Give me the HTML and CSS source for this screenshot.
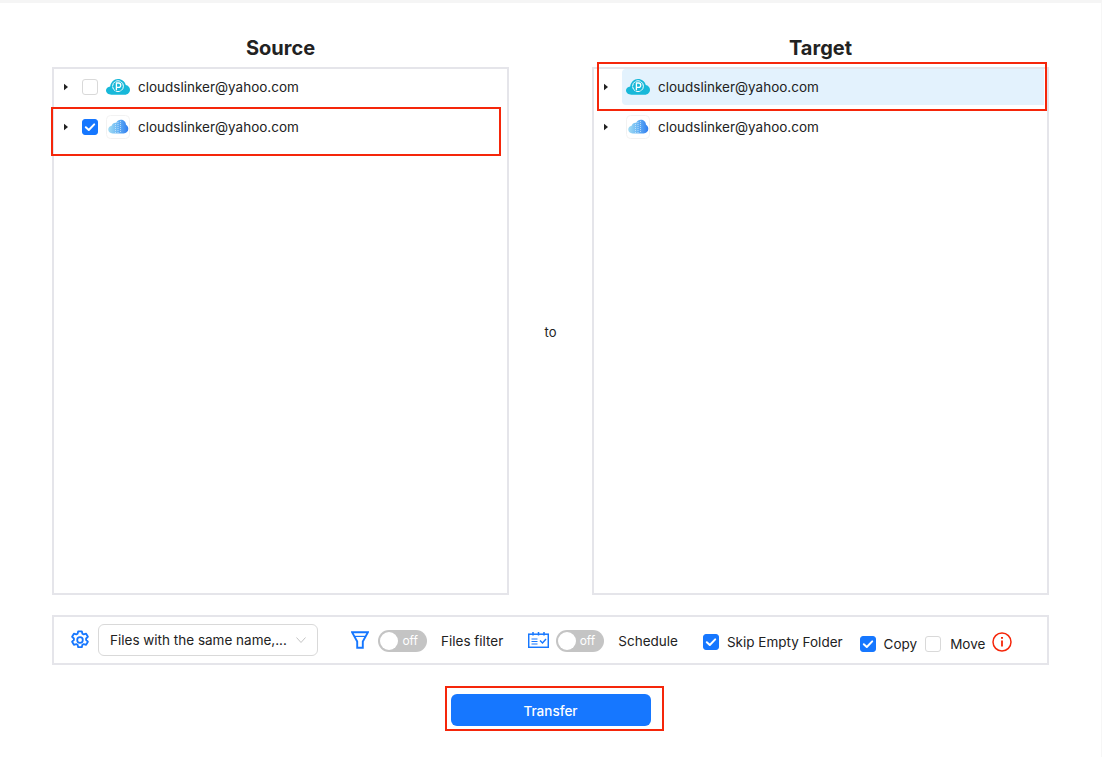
FILE: index.html
```html
<!DOCTYPE html>
<html lang="en">
<head>
<meta charset="utf-8">
<title>Transfer</title>
<link rel="stylesheet" href="styles.css">
</head>
<body>
<svg class="defs" width="0" height="0" aria-hidden="true">
  <defs>
    <linearGradient id="ic" x1="0" y1="0" x2="1" y2="0">
      <stop offset="0" stop-color="#a3dcf3"/>
      <stop offset="0.45" stop-color="#6db8f4"/>
      <stop offset="1" stop-color="#2f7df0"/>
    </linearGradient>
    <symbol id="pcloud" viewBox="0 0 24 16">
      <path d="M5.500 15.700C2.400 15.700 0 13.800 0 11.300 0 9.100 1.800 7.700 4.200 7.400 4.800 3.200 8 .1 12 .1c3.800 0 6.900 2.600 7.800 5.800 2.400.5 4.200 2.400 4.200 4.800 0 2.800-2.300 5-5.300 5z" fill="#17b8d9"/>
      <circle cx="12" cy="7.200" r="5.400" fill="none" stroke="#fff" stroke-width="1" stroke-dasharray="5 .6"/>
      <path d="M10.400 11.200V4h2.200a2.100 2.100 0 0 1 0 4.300h-2.200" fill="none" stroke="#fff" stroke-width="1.300"/>
    </symbol>
    <symbol id="icloud" viewBox="0 0 24 24">
      <rect x=".5" y=".5" width="23" height="23" rx="4" fill="#fff" stroke="#f2f2f2"/>
      <path d="M6.500 18.500C4 18.500 2.200 16.800 2.200 14.600c0-2 1.500-3.500 3.400-3.800C6.300 8.500 8.300 7.500 10.100 7.900 11 6 12.800 4.800 14.800 4.800c2.900 0 5.100 2.100 5.200 4.900 1.400.8 2.300 2.300 2.300 4.100 0 2.700-2 4.700-4.700 4.700z" fill="url(#ic)"/>
      <path d="M9.500 9v9M12 7v11M14.500 6v12" stroke="#d7ebfc" stroke-width=".7" stroke-dasharray="1 1" fill="none"/>
    </symbol>
    <symbol id="tick" viewBox="0 0 16 16">
      <path d="M3.800 8.200 6.800 11 12.200 5.400" fill="none" stroke="#fff" stroke-width="2" stroke-linecap="round" stroke-linejoin="round"/>
    </symbol>
    <symbol id="caret" viewBox="0 0 6 8">
      <path d="M1 .7 5 4 1 7.300z" fill="#222"/>
    </symbol>
  </defs>
</svg>

<main class="page">
  <div class="columns">
    <section class="col">
      <h2 class="title">Source</h2>
      <div class="panel">
        <div class="row">
          <svg class="caret"><use href="#caret"/></svg>
          <span class="check"></span>
          <svg class="logo"><use href="#pcloud"/></svg>
          <span class="label">cloudslinker@yahoo.com</span>
        </div>
        <div class="row">
          <svg class="caret"><use href="#caret"/></svg>
          <span class="check on"><svg class="tick"><use href="#tick"/></svg></span>
          <svg class="logo square"><use href="#icloud"/></svg>
          <span class="label">cloudslinker@yahoo.com</span>
        </div>
        <span class="mark mark-source"></span>
      </div>
    </section>

    <div class="to">to</div>

    <section class="col">
      <h2 class="title">Target</h2>
      <div class="panel">
        <div class="row">
          <svg class="caret"><use href="#caret"/></svg>
          <div class="pick selected">
            <svg class="logo"><use href="#pcloud"/></svg>
            <span class="label">cloudslinker@yahoo.com</span>
          </div>
        </div>
        <div class="row">
          <svg class="caret"><use href="#caret"/></svg>
          <div class="pick">
            <svg class="logo square"><use href="#icloud"/></svg>
            <span class="label">cloudslinker@yahoo.com</span>
          </div>
        </div>
        <span class="mark mark-target"></span>
      </div>
    </section>
  </div>

  <div class="toolbar">
    <svg class="gear" viewBox="0 0 20 20" fill="none" stroke="#1677ff" stroke-width="1.800" stroke-linejoin="round">
      <path d="M8.200 1.300h3.600l.6 2.400 1.300.7 2.400-.7 1.800 3.100-1.800 1.700v1.500l1.800 1.700-1.800 3.100-2.400-.7-1.300.7-.6 2.400H8.200l-.6-2.400-1.300-.7-2.400.7-1.800-3.100 1.800-1.700V8.500L2.100 6.800l1.800-3.100 2.400.7 1.300-.7z"/>
      <circle cx="10" cy="10" r="2.800"/>
    </svg>
    <div class="select">
      <span class="select-text">Files with the same name,...</span>
      <svg class="chev" viewBox="0 0 10 8" fill="none" stroke="#c4c4c4" stroke-width="1"><path d="M.5 1.500 5 6.500 9.500 1.500"/></svg>
    </div>
    <svg class="funnel" viewBox="0 0 18 18" fill="none" stroke="#1677ff" stroke-width="1.900" stroke-linejoin="miter">
      <path d="M1 1.200h16L11.800 10.500v6.300H6.200v-6.300z"/>
      <path d="M3.500 5.400h11" stroke-width="1.200"/>
    </svg>
    <span class="switch"><span class="knob"></span><span class="off">off</span></span>
    <span class="opt opt-filter">Files filter</span>
    <svg class="cal" viewBox="0 0 21 16" fill="none" stroke="#1677ff" stroke-width="1.500">
      <rect x=".7" y="2.200" width="19.600" height="13.100"/>
      <path d="M5 0v3.500M10.500 0v3.500M16 0v3.500" stroke-width="1.500"/>
      <path d="M3.500 7h6M3.500 9.500h6M3.500 12h6" stroke-width="1"/>
      <path d="M12 8.500l2.500 2.500 3.500-4" stroke-width="1.400"/>
    </svg>
    <span class="switch switch-sched"><span class="knob"></span><span class="off">off</span></span>
    <span class="opt opt-sched">Schedule</span>
    <span class="check on mid"><svg class="tick"><use href="#tick"/></svg></span>
    <span class="opt opt-skip mid">Skip Empty Folder</span>
    <span class="check on low"><svg class="tick"><use href="#tick"/></svg></span>
    <span class="opt opt-copy low">Copy</span>
    <span class="check low"></span>
    <span class="opt opt-move low">Move</span>
    <svg class="info" viewBox="0 0 20 20" fill="none" stroke="#f5260a" stroke-width="1.500">
      <circle cx="10" cy="10" r="9"/>
      <path d="M10 8.500v6" stroke-width="1.800"/>
      <path d="M10 5v1.800" stroke-width="2"/>
    </svg>
  </div>

  <div class="actions">
    <button class="transfer" type="button">Transfer</button>
    <span class="mark mark-transfer"></span>
  </div>
</main>
</body>
</html>
```

FILE: styles.css
```css
* { box-sizing: border-box; }
html, body { margin: 0; height: 100%; }
body {
  background: #fff;
  color: #222;
  font-family: Inter, "Liberation Sans", sans-serif;
  font-size: 13.5px;
  overflow: hidden;
}
.defs { position: absolute; }
.page {
  height: 757px;
  padding: 0 52px;
  border-top: 3px solid #f5f5f5;
  border-right: 1px solid #f6f6f6;
}
.columns {
  display: grid;
  grid-template-columns: 457px 1fr 457px;
  height: 592px;
}
.col { display: flex; flex-direction: column; }
.title {
  margin: 0;
  height: 64px;
  padding-top: 31px;
  text-align: center;
  font-size: 20px;
  line-height: 28px;
  font-weight: 700;
  color: #222;
}
.panel {
  position: relative;
  display: flex;
  flex-direction: column;
  gap: 4px;
  height: 528px;
  border: 2px solid #e5e5ea;
}
.row {
  display: flex;
  align-items: center;
  height: 36px;
  padding-left: 9px;
}
.caret { width: 6px; height: 8px; flex: none; margin-right: 13px; }
.check {
  width: 16px;
  height: 16px;
  flex: none;
  display: inline-flex;
  border-radius: 3px;
  border: 1px solid #d9d9d9;
  background: #fff;
}
.check.on { background: #1677ff; border-color: #1677ff; }
.tick { width: 16px; height: 16px; margin: -1px; flex: none; }
.logo { width: 24px; height: 16px; margin-left: 8px; margin-right: 8px; flex: none; }
.logo.square { height: 24px; }
.label { font-size: 13.5px; line-height: 20px; color: #222; }
.pick {
  display: flex;
  align-items: center;
  flex: 1;
  height: 100%;
  margin-right: 3px;
  border-radius: 4px 0 0 4px;
}
.pick .logo { margin-left: 4px; }
.pick.selected { background: #e3f2fd; }
.to {
  display: flex;
  align-items: center;
  justify-content: center;
  padding-top: 65px;
  font-size: 13px;
}
.toolbar {
  display: flex;
  align-items: center;
  height: 50px;
  margin-top: 20px;
  border: 2px solid #e5e5ea;
  padding-left: 16px;
}
.gear { width: 20px; height: 20px; flex: none; }
.select {
  display: flex;
  align-items: center;
  justify-content: space-between;
  width: 220px;
  height: 32px;
  margin-left: 8px;
  padding: 0 11px;
  border: 1px solid #d9d9d9;
  border-radius: 6px;
  flex: none;
}
.select-text { font-size: 13.5px; color: #222; white-space: nowrap; }
.chev { width: 10px; height: 8px; flex: none; }
.funnel { width: 18px; height: 18px; margin-left: 33px; flex: none; }
.switch {
  position: relative;
  display: inline-flex;
  align-items: center;
  justify-content: flex-end;
  width: 49px;
  height: 22px;
  margin-left: 9px;
  margin-top: 2px;
  padding-right: 9px;
  border-radius: 11px;
  background: #c4c4c4;
  flex: none;
}
.switch-sched { width: 48px; margin-left: 7px; }
.knob {
  position: absolute;
  left: 2px;
  top: 2px;
  width: 18px;
  height: 18px;
  border-radius: 50%;
  background: #fff;
}
.off { color: #fff; font-size: 12px; line-height: 22px; }
.opt { font-size: 13.5px; line-height: 20px; color: #222; white-space: nowrap; margin-top: 2px; }
.opt-filter { margin-left: 14px; }
.cal { width: 21px; height: 16px; margin-left: 25px; flex: none; }
.opt-sched { margin-left: 14px; margin-right: 25px; }
.opt-skip { margin-left: 8px; }
.check.mid, .opt.mid { margin-top: 4px; }
.check.low, .opt.low { margin-top: 8px; }
.opt-skip + .check { margin-left: 17px; }
.opt-copy { margin-left: 8px; }
.opt-copy + .check { margin-left: 8px; }
.opt-move { margin-left: 9px; }
.info { width: 20px; height: 20px; margin-left: 7px; margin-top: 4px; flex: none; }
.actions {
  position: relative;
  display: flex;
  justify-content: center;
  margin-top: 29px;
}
.transfer {
  width: 200px;
  height: 32px;
  padding: 2px 0 0;
  border: 0;
  border-radius: 6px;
  background: #1677ff;
  color: #fff;
  font: 500 13.5px Inter, "Liberation Sans", sans-serif;
}
.mark { position: absolute; border: 2px solid #f5260a; pointer-events: none; }
.mark-source { left: -3px; top: 38px; width: 450px; height: 49px; }
.mark-target { left: 3px; top: -7px; width: 450px; height: 49px; }
.mark-transfer { left: 393px; top: -8px; width: 219px; height: 45px; }
```
